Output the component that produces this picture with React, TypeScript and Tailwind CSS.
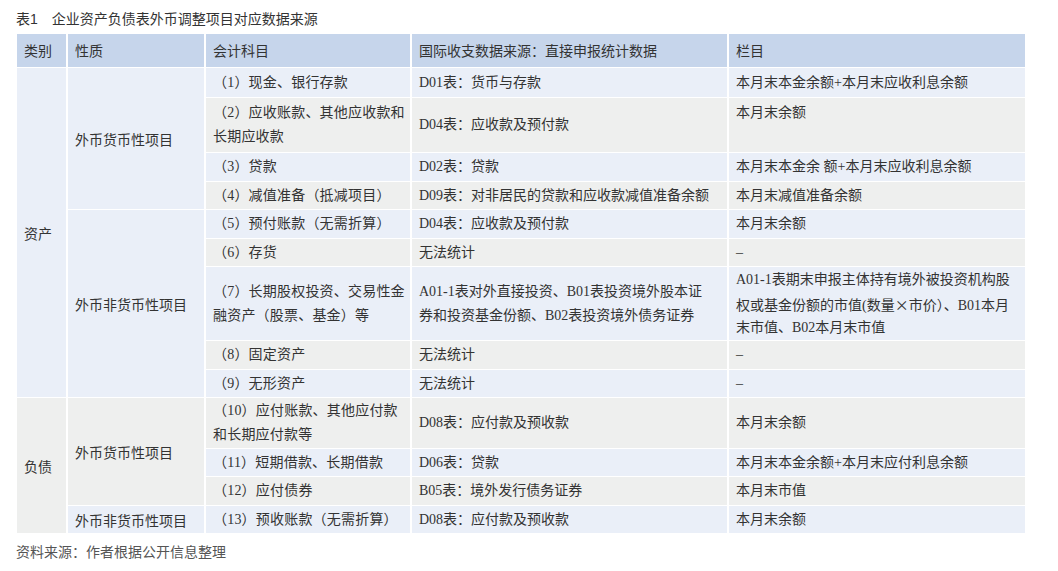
type Row = {
  h: string;
  bg: "blue" | "gray";
  cat?: { text: string; span: number };
  kind?: { text: string; span: number; align?: string };
  item: string[];
  src: string[];
  col: string[];
  colTop?: boolean;
};

const rows: Row[] = [
  {
    h: "h-[30px]",
    bg: "blue",
    cat: { text: "资产", span: 9 },
    kind: { text: "外币货币性项目", span: 4 },
    item: ["（1）现金、银行存款"],
    src: ["D01表：货币与存款"],
    col: ["本月末本金余额+本月末应收利息余额"],
  },
  {
    h: "h-[55px]",
    bg: "gray",
    item: ["（2）应收账款、其他应收款和", "长期应收款"],
    src: ["D04表：应收款及预付款"],
    col: ["本月末余额"],
    colTop: true,
  },
  {
    h: "h-[29px]",
    bg: "blue",
    item: ["（3）贷款"],
    src: ["D02表：贷款"],
    col: ["本月末本金余 额+本月末应收利息余额"],
  },
  {
    h: "h-[28px]",
    bg: "gray",
    item: ["（4）减值准备（抵减项目）"],
    src: ["D09表：对非居民的贷款和应收款减值准备余额"],
    col: ["本月末减值准备余额"],
  },
  {
    h: "h-[29px]",
    bg: "blue",
    kind: { text: "外币非货币性项目", span: 5 },
    item: ["（5）预付账款（无需折算）"],
    src: ["D04表：应收款及预付款"],
    col: ["本月末余额"],
  },
  {
    h: "h-[28px]",
    bg: "gray",
    item: ["（6）存货"],
    src: ["无法统计"],
    col: ["–"],
  },
  {
    h: "h-[74px]",
    bg: "blue",
    item: ["（7）长期股权投资、交易性金", "融资产（股票、基金）等"],
    src: ["A01-1表对外直接投资、B01表投资境外股本证", "券和投资基金份额、B02表投资境外债务证券"],
    col: ["A01-1表期末申报主体持有境外被投资机构股", "权或基金份额的市值(数量×市价）、B01本月", "末市值、B02本月末市值"],
  },
  {
    h: "h-[29px]",
    bg: "gray",
    item: ["（8）固定资产"],
    src: ["无法统计"],
    col: ["–"],
  },
  {
    h: "h-[28px]",
    bg: "blue",
    item: ["（9）无形资产"],
    src: ["无法统计"],
    col: ["–"],
  },
  {
    h: "h-[51px]",
    bg: "gray",
    cat: { text: "负债", span: 4 },
    kind: { text: "外币货币性项目", span: 3 },
    item: ["（10）应付账款、其他应付款", "和长期应付款等"],
    src: ["D08表：应付款及预收款"],
    col: ["本月末余额"],
  },
  {
    h: "h-[28px]",
    bg: "blue",
    item: ["（11）短期借款、长期借款"],
    src: ["D06表：贷款"],
    col: ["本月末本金余额+本月末应付利息余额"],
  },
  {
    h: "h-[29px]",
    bg: "gray",
    item: ["（12）应付债券"],
    src: ["B05表：境外发行债务证券"],
    col: ["本月末市值"],
  },
  {
    h: "h-[28px]",
    bg: "blue",
    kind: { text: "外币非货币性项目", span: 1 },
    item: ["（13）预收账款（无需折算）"],
    src: ["D08表：应付款及预收款"],
    col: ["本月末余额"],
  },
];

// the × sign is full width in the source, so set it in the CJK face
function Line({ text }: { text: string }) {
  const parts = text.split("×");
  return (
    <div className="h-[24px] whitespace-nowrap">
      {parts.map((p, i) => (
        <span key={i}>
          {i > 0 && <span className="font-['Noto_Sans_CJK_SC',sans-serif]">×</span>}
          {p}
        </span>
      ))}
    </div>
  );
}

function Lines({ lines }: { lines: string[] }) {
  return (
    <>
      {lines.map((l, i) => (
        <Line key={i} text={l} />
      ))}
    </>
  );
}

export default function App() {
  const cell = "border-x-2 border-y border-white px-[7px] align-middle leading-[24px]";
  return (
    <div className="h-[571px] w-[1058px] bg-white px-4 pt-[7px] font-['Liberation_Serif','Noto_Sans_CJK_SC',serif] text-[14px] text-[#333]">
      <p className="flex h-[24px] items-center gap-[14px] font-['Liberation_Sans','Noto_Sans_CJK_SC',sans-serif] text-[#333]">
        <span>表1</span>
        <span>企业资产负债表外币调整项目对应数据来源</span>
      </p>
      <table className="mt-[2px] w-[1010px] -ml-[1px] table-fixed border-collapse">
        <colgroup>
          <col className="w-[51px]" />
          <col className="w-[138px]" />
          <col className="w-[206px]" />
          <col className="w-[317px]" />
          <col className="w-[298px]" />
        </colgroup>
        <thead>
          <tr className="h-[34px] bg-[#c6d5eb] font-['Liberation_Sans','Noto_Sans_CJK_SC',sans-serif] text-left">
            <th className={`${cell} font-normal`}>类别</th>
            <th className={`${cell} font-normal`}>性质</th>
            <th className={`${cell} font-normal`}>会计科目</th>
            <th className={`${cell} font-normal`}>国际收支数据来源：直接申报统计数据</th>
            <th className={`${cell} font-normal`}>栏目</th>
          </tr>
        </thead>
        <tbody>
          {rows.map((r, i) => {
            const bg = r.bg === "blue" ? "bg-[#eaeff8]" : "bg-[#eeefee]";
            return (
              <tr key={i} className={`${r.h} ${bg}`}>
                {r.cat && (
                  <td rowSpan={r.cat.span} className={`${cell} ${bg} font-['Noto_Sans_CJK_SC',sans-serif]`}>
                    {r.cat.text}
                  </td>
                )}
                {r.kind && (
                  <td rowSpan={r.kind.span} className={`${cell} ${bg} font-['Noto_Sans_CJK_SC',sans-serif]`}>
                    {r.kind.text}
                  </td>
                )}
                <td className={`${cell} tracking-[0.2px]`}>
                  <Lines lines={r.item} />
                </td>
                <td className={cell}>
                  <Lines lines={r.src} />
                </td>
                <td className={`${cell} ${r.colTop ? "align-top pt-[3px]" : ""}`}>
                  <Lines lines={r.col} />
                </td>
              </tr>
            );
          })}
        </tbody>
      </table>
      <p className="mt-[5px] font-['Noto_Sans_CJK_SC',sans-serif] text-[14px] leading-[24px] text-[#555]">
        资料来源：作者根据公开信息整理
      </p>
    </div>
  );
}
